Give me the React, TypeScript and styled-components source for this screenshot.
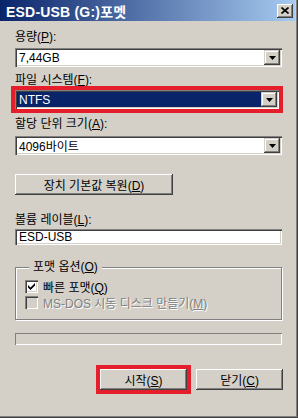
import React from 'react';
import styled, { createGlobalStyle } from 'styled-components';

const GlobalStyle = createGlobalStyle`
  html, body {
    margin: 0;
    padding: 0;
    background: #d4d0c8;
  }
  body {
    font-family: 'Liberation Sans', 'Noto Sans CJK KR', sans-serif;
    font-size: 12px;
    color: #000;
  }
`;

const Window = styled.div`
  box-sizing: border-box;
  width: 298px;
  height: 418px;
  padding: 0 3px 3px 0;
  display: flex;
  flex-direction: column;
  background: #d4d0c8;
  box-shadow: inset -1px -1px #404040, inset -2px -2px #808080;
  overflow: hidden;
`;

const TitleBar = styled.div`
  height: 21px;
  padding: 0 2px 0 6px;
  display: flex;
  align-items: center;
  justify-content: space-between;
  background: linear-gradient(to right, #0a246a, #a6caf0);
`;

const Title = styled.span`
  color: #fff;
  font-weight: bold;
  font-size: 14px;
  letter-spacing: 0.2px;
`;

const CloseButton = styled.div`
  width: 16px;
  height: 14px;
  display: flex;
  align-items: center;
  justify-content: center;
  background: #d4d0c8;
  box-shadow: inset -1px -1px #404040, inset 1px 1px #fff,
    inset -2px -2px #808080;
`;

const Body = styled.div`
  flex: 1;
  display: flex;
  flex-direction: column;
  padding: 9px 13px 0 15px;
`;

const Label = styled.div<{ $gap: number }>`
  margin-top: ${(p) => p.$gap}px;
  height: 14px;
  line-height: 14px;
  white-space: nowrap;
`;

const Sunken = styled.div<{ $gap: number; $height: number }>`
  box-sizing: border-box;
  margin-top: ${(p) => p.$gap}px;
  height: ${(p) => p.$height}px;
  padding: 2px;
  display: flex;
  align-items: stretch;
  background: #fff;
  box-shadow: inset 1px 1px #808080, inset 2px 2px #404040,
    inset -1px -1px #fff, inset -2px -2px #d4d0c8;
`;

const FieldText = styled.div<{ $selected?: boolean }>`
  flex: 1;
  padding-left: 2px;
  display: flex;
  align-items: center;
  white-space: nowrap;
  background: ${(p) => (p.$selected ? '#0a246a' : 'transparent')};
  color: ${(p) => (p.$selected ? '#fff' : '#000')};
`;

const DropButton = styled.div`
  width: 16px;
  display: flex;
  align-items: center;
  justify-content: center;
  background: #d4d0c8;
  box-shadow: inset -1px -1px #404040, inset 1px 1px #d4d0c8,
    inset -2px -2px #808080, inset 2px 2px #fff;
`;

const Highlight = styled.div<{ $gap: number; $trim?: number }>`
  margin-top: ${(p) => p.$gap}px;
  margin-right: ${(p) => p.$trim ?? 0}px;
  outline: 4px solid #e41f2b;
  outline-offset: 0;
`;

const PushButton = styled.div<{ $width: number; $gap?: number }>`
  box-sizing: border-box;
  margin-top: ${(p) => p.$gap ?? 0}px;
  width: ${(p) => p.$width}px;
  height: 21px;
  display: flex;
  align-items: center;
  justify-content: center;
  background: #d4d0c8;
  white-space: nowrap;
  box-shadow: inset -1px -1px #404040, inset 1px 1px #fff,
    inset -2px -2px #808080, inset 2px 2px #d4d0c8;
`;

const Group = styled.fieldset`
  margin: 15px 0 0;
  padding: 4px 0 9px 9px;
  min-width: 0;
  border: 1px solid #808080;
  box-shadow: inset 1px 1px #fff, 1px 1px #fff;
  display: flex;
  flex-direction: column;
`;

const Legend = styled.legend`
  margin-left: 4px;
  padding: 0 4px;
  height: 14px;
  line-height: 14px;
  background: #d4d0c8;
`;

const CheckRow = styled.div<{ $disabled?: boolean }>`
  height: 16px;
  display: flex;
  align-items: center;
  gap: 5px;
  white-space: nowrap;
  color: ${(p) => (p.$disabled ? '#808080' : '#000')};
  text-shadow: ${(p) => (p.$disabled ? '1px 1px #fff' : 'none')};
`;

const CheckBox = styled.div<{ $disabled?: boolean }>`
  box-sizing: border-box;
  width: 13px;
  height: 13px;
  display: flex;
  align-items: center;
  justify-content: center;
  background: ${(p) => (p.$disabled ? '#d4d0c8' : '#fff')};
  box-shadow: inset 1px 1px #808080, inset 2px 2px #404040,
    inset -1px -1px #fff, inset -2px -2px #d4d0c8;
`;

const Progress = styled.div`
  margin-top: 13px;
  height: 12px;
  box-shadow: inset 1px 1px #808080, inset -1px -1px #fff;
`;

const ButtonRow = styled.div`
  margin-top: 24px;
  display: flex;
  justify-content: flex-end;
  gap: 9px;
  margin-right: -1px;
`;

const Arrow = () => (
  <svg width='7' height='4' viewBox='0 0 7 4'>
    <polygon points='0,0 7,0 3.5,4' fill='#000' />
  </svg>
);

const Combo = ({ text, selected, gap }: { text: string; selected?: boolean; gap: number }) => (
  <Sunken $gap={gap} $height={19}>
    <FieldText $selected={selected}>{text}</FieldText>
    <DropButton>
      <Arrow />
    </DropButton>
  </Sunken>
);

export default function App() {
  return (
    <Window>
      <GlobalStyle />
      <TitleBar>
        <Title>ESD-USB (G:)포멧</Title>
        <CloseButton>
          <svg width='8' height='7' viewBox='0 0 8 7'>
            <path d='M0.5 0.5 L7.5 6.5 M7.5 0.5 L0.5 6.5' stroke='#000' strokeWidth='1.6' />
          </svg>
        </CloseButton>
      </TitleBar>
      <Body>
        <Label $gap={0}>
          용량(<u>P</u>):
        </Label>
        <Combo gap={4} text='7,44GB' />
        <Label $gap={6}>
          파일 시스템(<u>F</u>):
        </Label>
        <Highlight $gap={3} $trim={3}>
          <Combo gap={0} text='NTFS' selected />
        </Highlight>
        <Label $gap={8}>
          할당 단위 크기(<u>A</u>):
        </Label>
        <Combo gap={5} text='4096바이트' />
        <PushButton $width={158} $gap={19}>
          <span>
            장치 기본값 복원(<u>D</u>)
          </span>
        </PushButton>
        <Label $gap={18}>
          볼륨 레이블(<u>L</u>):
        </Label>
        <Sunken $gap={2} $height={16}>
          <FieldText>ESD-USB</FieldText>
        </Sunken>
        <Group>
          <Legend>
            포맷 옵션(<u>O</u>)
          </Legend>
          <CheckRow>
            <CheckBox>
              <svg width='7' height='7' viewBox='0 0 7 7'>
                <path d='M0 2 L0 4.5 L2.5 7 L7 2.5 L7 0 L2.5 4.5 Z' fill='#000' />
              </svg>
            </CheckBox>
            <span>
              빠른 포맷(<u>Q</u>)
            </span>
          </CheckRow>
          <CheckRow $disabled>
            <CheckBox $disabled />
            <span>
              MS-DOS 시동 디스크 만들기(<u>M</u>)
            </span>
          </CheckRow>
        </Group>
        <Progress />
        <ButtonRow>
          <Highlight $gap={0}>
            <PushButton $width={87}>
              <span>
                시작(<u>S</u>)
              </span>
            </PushButton>
          </Highlight>
          <PushButton $width={87}>
            <span>
              닫기(<u>C</u>)
            </span>
          </PushButton>
        </ButtonRow>
      </Body>
    </Window>
  );
}
